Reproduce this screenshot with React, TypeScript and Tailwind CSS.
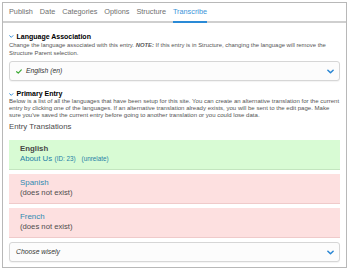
import React from 'react';

const tabs = ['Publish', 'Date', 'Categories', 'Options', 'Structure', 'Transcribe'];

function Chevron({ className }: { className?: string }) {
  return (
    <svg viewBox="0 0 8 5" className={className} fill="none">
      <polyline points="1,1 4,4 7,1" stroke="#2a86d3" strokeWidth="1.7" strokeLinecap="round" strokeLinejoin="round" />
    </svg>
  );
}

function Select({ children }: { children: React.ReactNode }) {
  return (
    <div className="h-[20px] flex items-center justify-between rounded-[3px] border border-[#d6d6d6] bg-[#fcfcfc] shadow-[0_1px_1px_rgba(0,0,0,0.05)] pl-[6px] pr-[5px]">
      <div className="flex items-center text-[6.8px] italic text-[#333]">{children}</div>
      <Chevron className="w-[7px] h-[5px]" />
    </div>
  );
}

export default function App() {
  return (
    <div className="w-[349px] h-[270px] bg-white pt-[2px] pl-[2px] font-['Liberation_Sans',Arial,sans-serif]">
      <div className="w-[345px] h-[266px] border border-[#b8b8b8]">
        <div className="flex gap-[6.9px] pl-[6px] border-b-2 border-[#cfcfcf]">
          {tabs.map((t) => (
            <div
              key={t}
              className={
                t === 'Transcribe'
                  ? 'h-[20px] leading-[18px] text-[7.3px] text-[#3a95d9] border-b-2 border-[#2a8ad6] -mb-[2px]'
                  : 'h-[18px] leading-[18px] text-[7.3px] text-[#6f6f6f]'
              }
            >
              {t}
            </div>
          ))}
        </div>

        <div className="pl-[6px] pr-[6px]">
          <div className="mt-[8.5px] flex items-center gap-[3px] leading-[9px]">
            <Chevron className="w-[4.5px] h-[3px]" />
            <span className="text-[7px] font-bold text-black">Language Association</span>
          </div>
          <p className="text-[5.9px] leading-[8px] text-[#555]">
            Change the language associated with this entry. <span className="font-bold italic">NOTE:</span> If this entry
            is in Structure, changing the language will remove the Structure Parent selection.
          </p>
          <div className="mt-[4.5px]">
            <Select>
              <svg viewBox="0 0 9 7" className="w-[6px] h-[5px] mr-[4px]" fill="none">
                <polyline points="1,3.8 3.4,6 8,1" stroke="#3eaa36" strokeWidth="1.8" strokeLinecap="round" strokeLinejoin="round" />
              </svg>
              <span>English (en)</span>
            </Select>
          </div>

          <div className="mt-[9px] flex items-center gap-[3px] leading-[8px]">
            <Chevron className="w-[4.5px] h-[3px]" />
            <span className="text-[7px] font-bold text-black">Primary Entry</span>
          </div>
          <p className="text-[6.05px] leading-[7.2px] text-[#555]">
            Below is a list of all the languages that have been setup for this site. You can create an alternative
            translation for the current entry by clicking one of the languages. If an alternative translation already
            exists, you will be sent to the edit page. Make sure you've saved the current entry before going to another
            translation or you could lose data.
          </p>

          <div className="mt-[2px] text-[7.8px] leading-[9px] text-[#4a4a4a]">Entry Translations</div>

          <div className="mt-[9.5px] flex flex-col gap-[4px]">
            <div className="h-[30px] bg-[#d8fbd4] border-b border-[#c3e5bf] pl-[11px] pt-[4px] leading-[10px]">
              <div className="text-[7.8px] font-bold text-[#474747]">English</div>
              <div className="flex items-baseline text-[#1f7fa6]">
                <span className="text-[7.8px]">About Us</span>
                <span className="text-[6.3px] ml-[2.5px]">(ID: 23)</span>
                <span className="text-[6.3px] ml-[6px]">(unrelate)</span>
              </div>
            </div>
            <div className="h-[30px] bg-[#fde0e0] border-b border-[#efcaca] pl-[11px] pt-[4px] leading-[10px]">
              <div className="text-[7.9px] text-[#2f8ab0]">Spanish</div>
              <div className="text-[7.7px] text-[#4d4d4d]">(does not exist)</div>
            </div>
            <div className="h-[30px] bg-[#fde0e0] border-b border-[#efcaca] pl-[11px] pt-[4px] leading-[10px]">
              <div className="text-[7.9px] text-[#2f8ab0]">French</div>
              <div className="text-[7.7px] text-[#4d4d4d]">(does not exist)</div>
            </div>
            <Select>
              <span>Choose wisely</span>
            </Select>
          </div>
        </div>
      </div>
    </div>
  );
}
